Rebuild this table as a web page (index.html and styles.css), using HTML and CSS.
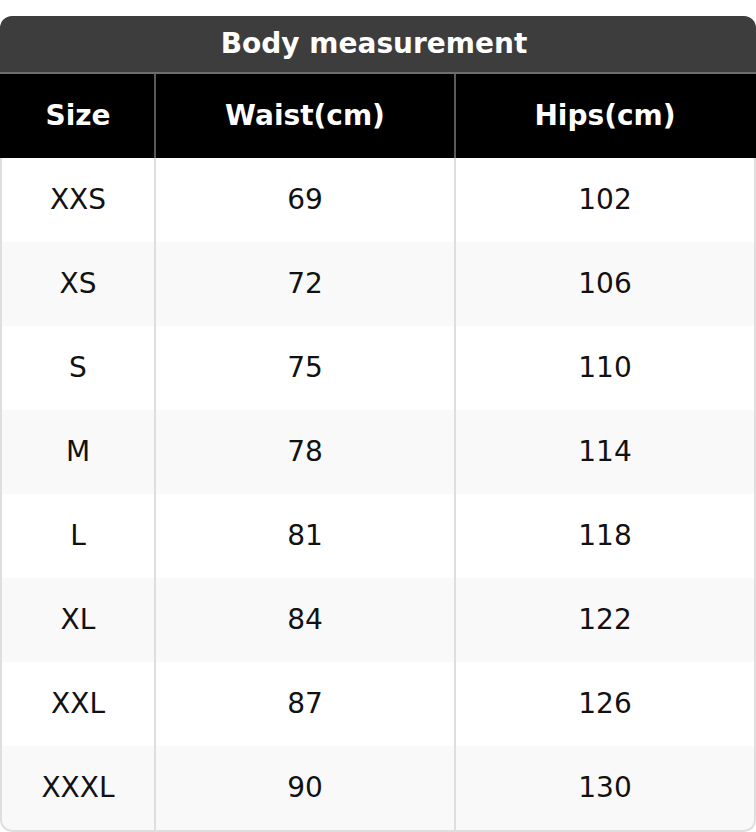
FILE: index.html
```html
<!DOCTYPE html>
<html>
<head>
<meta charset="utf-8">
<link rel="stylesheet" href="styles.css">
</head>
<body>
<div class="card">
  <div class="title">Body measurement</div>
  <div class="grid">
    <div class="cell head first">Size</div>
    <div class="cell head">Waist(cm)</div>
    <div class="cell head last">Hips(cm)</div>

    <div class="cell first">XXS</div><div class="cell">69</div><div class="cell last">102</div>
    <div class="cell first alt">XS</div><div class="cell alt">72</div><div class="cell last alt">106</div>
    <div class="cell first">S</div><div class="cell">75</div><div class="cell last">110</div>
    <div class="cell first alt">M</div><div class="cell alt">78</div><div class="cell last alt">114</div>
    <div class="cell first">L</div><div class="cell">81</div><div class="cell last">118</div>
    <div class="cell first alt">XL</div><div class="cell alt">84</div><div class="cell last alt">122</div>
    <div class="cell first">XXL</div><div class="cell">87</div><div class="cell last">126</div>
    <div class="cell first alt end">XXXL</div><div class="cell alt end">90</div><div class="cell last alt end">130</div>
  </div>
</div>
</body>
</html>
```
FILE: styles.css
```css
html, body {
  margin: 0;
  padding: 0;
  background: #ffffff;
}
body {
  font-family: "DejaVu Sans", "Liberation Sans", sans-serif;
}
.card {
  width: 756px;
  margin-top: 16px;
  border-radius: 12px;
  overflow: hidden;
}
.title {
  box-sizing: border-box;
  height: 58px;
  padding: 0 8px 2px 0;
  background: #3d3d3d;
  color: #ffffff;
  font-weight: bold;
  font-size: 28px;
  display: flex;
  align-items: center;
  justify-content: center;
  border-bottom: 2px solid #6e6e6e;
}
.grid {
  display: grid;
  grid-template-columns: 156px 300px 300px;
  grid-template-rows: 84px repeat(7, 84px) 86px;
}
.cell {
  box-sizing: border-box;
  display: flex;
  align-items: center;
  justify-content: center;
  padding-bottom: 2px;
  font-size: 28px;
  color: #111111;
  background: #ffffff;
  border-right: 2px solid #dedede;
}
.cell.first {
  border-left: 2px solid #dedede;
}
.cell.alt {
  background: #f9f9f9;
}
.cell.end {
  border-bottom: 2px solid #dedede;
}
.cell.head {
  background: #000000;
  color: #ffffff;
  font-weight: bold;
  border-right: 2px solid #5a5a5a;
}
.cell.head.first {
  border-left: 2px solid #000000;
}
.cell.head.last {
  border-right: 2px solid #000000;
}
.cell.end.first {
  border-bottom-left-radius: 12px;
}
.cell.end.last {
  border-bottom-right-radius: 12px;
}
```
